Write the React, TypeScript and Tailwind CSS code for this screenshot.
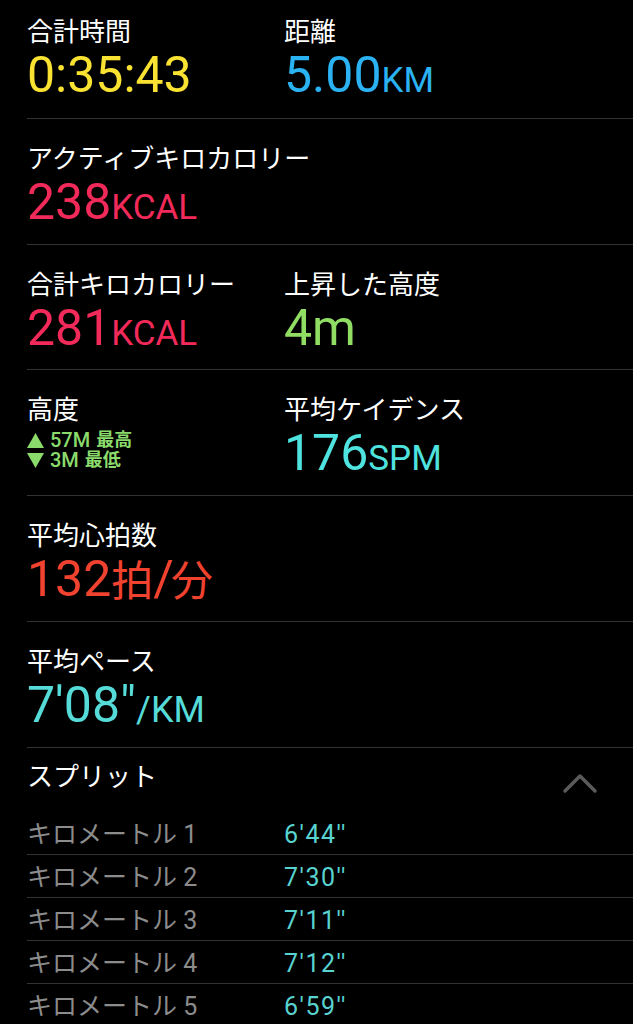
import type { ReactNode } from "react";

const FONT = "font-['Roboto','Noto_Sans_CJK_JP',sans-serif]";

function Label({ children }: { children: ReactNode }) {
  return <div className="text-[26px] leading-[30px] text-white">{children}</div>;
}

function Value({ color, children }: { color: string; children: ReactNode }) {
  return <div className={`text-[50px] leading-[56px] ${color}`}>{children}</div>;
}

function Unit({ children }: { children: ReactNode }) {
  return <span className="text-[35px]">{children}</span>;
}

function Chevron() {
  return (
    <svg width="36" height="22" viewBox="0 0 36 22" className="mt-[10px]">
      <polyline
        points="3,19 18,4 33,19"
        fill="none"
        stroke="#5a5a5a"
        strokeWidth="3.5"
        strokeLinecap="round"
        strokeLinejoin="round"
      />
    </svg>
  );
}

const splits = [
  { n: 1, t: "6'44''" },
  { n: 2, t: "7'30''" },
  { n: 3, t: "7'11''" },
  { n: 4, t: "7'12''" },
  { n: 5, t: "6'59''" },
];

export default function App() {
  return (
    <div className={`h-[1024px] overflow-hidden bg-black pl-[27px] ${FONT}`}>
      <div className="grid h-[119px] grid-cols-[257px_1fr] border-b border-[#333] pt-[17px]">
        <div>
          <Label>合計時間</Label>
          <Value color="text-[#fae232]">0:35:43</Value>
        </div>
        <div>
          <Label>距離</Label>
          <Value color="text-[#2ab2f2]">
            5.00<Unit>KM</Unit>
          </Value>
        </div>
      </div>

      <div className="h-[126px] border-b border-[#333] pt-[25px]">
        <Label>アクティブキロカロリー</Label>
        <Value color="text-[#f22a5a]">
          238<Unit>KCAL</Unit>
        </Value>
      </div>

      <div className="grid h-[125px] grid-cols-[257px_1fr] border-b border-[#333] pt-[25px]">
        <div>
          <Label>合計キロカロリー</Label>
          <Value color="text-[#f22a5a]">
            281<Unit>KCAL</Unit>
          </Value>
        </div>
        <div>
          <Label>上昇した高度</Label>
          <Value color="text-[#90dd63]">4m</Value>
        </div>
      </div>

      <div className="grid h-[126px] grid-cols-[257px_1fr] border-b border-[#333] pt-[25px]">
        <div>
          <Label>高度</Label>
          <div className="mt-[5px] text-[20px] font-medium leading-[20px] text-[#8bdb6c]">
            <div className="flex h-[20px] items-center">
              <svg width="17" height="15" viewBox="0 0 17 15" className="mr-[6px]">
                <polygon points="8.5,0 17,15 0,15" fill="#8bdb6c" />
              </svg>
              57M<span className="ml-[6px] text-[18px] font-bold">最高</span>
            </div>
            <div className="flex h-[20px] items-center">
              <svg width="17" height="15" viewBox="0 0 17 15" className="mr-[6px]">
                <polygon points="0,0 17,0 8.5,15" fill="#8bdb6c" />
              </svg>
              3M<span className="ml-[6px] text-[18px] font-bold">最低</span>
            </div>
          </div>
        </div>
        <div>
          <Label>平均ケイデンス</Label>
          <Value color="text-[#4fe3df]">
            176<Unit>SPM</Unit>
          </Value>
        </div>
      </div>

      <div className="h-[126px] border-b border-[#333] pt-[25px]">
        <Label>平均心拍数</Label>
        <Value color="text-[#f0422e]">
          132<span className="text-[42px]">拍</span>
          <span className="tracking-[-3px]">/</span>
          <span className="text-[42px]">分</span>
        </Value>
      </div>

      <div className="h-[126px] border-b border-[#333] pt-[25px]">
        <Label>平均ペース</Label>
        <Value color="text-[#56dcd8]">
          7'08"<span className="text-[36px]">/KM</span>
        </Value>
      </div>

      <div className="flex h-[64px] items-start justify-between pr-[35px] pt-[14px]">
        <Label>スプリット</Label>
        <Chevron />
      </div>

      {splits.map((s) => (
        <div
          key={s.n}
          className="grid h-[43px] grid-cols-[257px_1fr] items-center border-b border-[#333] pt-[3px] text-[25px] leading-[30px]"
        >
          <div className="text-[#8c8c8c]">キロメートル {s.n}</div>
          <div className="tracking-[1.5px] text-[#58d3d0]">{s.t}</div>
        </div>
      ))}
    </div>
  );
}
